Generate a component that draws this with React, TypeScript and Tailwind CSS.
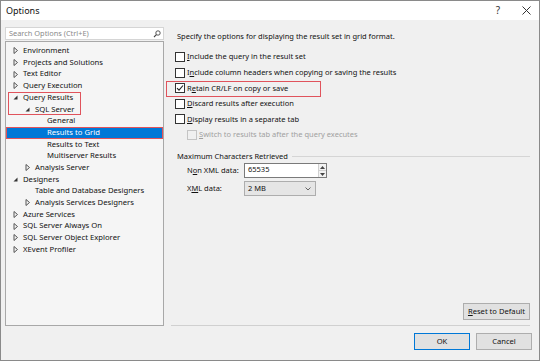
import React from "react";

type Node = {
  label: string;
  level: number;
  expander: "open" | "closed" | "none";
  selected?: boolean;
};

const tree: Node[] = [
  { label: "Environment", level: 0, expander: "closed" },
  { label: "Projects and Solutions", level: 0, expander: "closed" },
  { label: "Text Editor", level: 0, expander: "closed" },
  { label: "Query Execution", level: 0, expander: "closed" },
  { label: "Query Results", level: 0, expander: "open" },
  { label: "SQL Server", level: 1, expander: "open" },
  { label: "General", level: 2, expander: "none" },
  { label: "Results to Grid", level: 2, expander: "none", selected: true },
  { label: "Results to Text", level: 2, expander: "none" },
  { label: "Multiserver Results", level: 2, expander: "none" },
  { label: "Analysis Server", level: 1, expander: "closed" },
  { label: "Designers", level: 0, expander: "open" },
  { label: "Table and Database Designers", level: 1, expander: "none" },
  { label: "Analysis Services Designers", level: 1, expander: "closed" },
  { label: "Azure Services", level: 0, expander: "closed" },
  { label: "SQL Server Always On", level: 0, expander: "closed" },
  { label: "SQL Server Object Explorer", level: 0, expander: "closed" },
  { label: "XEvent Profiler", level: 0, expander: "closed" },
];

const Expander = ({ kind, light }: { kind: Node["expander"]; light?: boolean }) => {
  if (kind === "none") return <span className="w-[9px]" />;
  if (kind === "open")
    return (
      <svg width="9" height="9" viewBox="0 0 9 9" className="shrink-0">
        <path d="M6.5 2.5 L6.5 6.5 L2.5 6.5 Z" fill={light ? "#fff" : "#333"} />
      </svg>
    );
  return (
    <svg width="9" height="9" viewBox="0 0 9 9" className="shrink-0">
      <path d="M3 1.5 L6.5 4.5 L3 7.5 Z" fill="none" stroke="#555" strokeWidth="1" />
    </svg>
  );
};

const Check = ({ checked, disabled }: { checked?: boolean; disabled?: boolean }) => (
  <span
    className={`w-[10px] h-[10px] border shrink-0 flex items-center justify-center ${
      disabled ? "border-[#c4c4c4] bg-[#f0f0f0]" : "border-[#333] bg-white"
    }`}
  >
    {checked && (
      <svg width="8" height="8" viewBox="0 0 8 8">
        <path d="M1 4.2 L3 6.2 L7 1.5" fill="none" stroke="#222" strokeWidth="1.1" />
      </svg>
    )}
  </span>
);

const Opt = ({
  pre,
  key1,
  post,
  checked,
  disabled,
}: {
  pre: string;
  key1: string;
  post: string;
  checked?: boolean;
  disabled?: boolean;
}) => (
  <div className="flex items-center gap-[2px] h-[15.6px]">
    <Check checked={checked} disabled={disabled} />
    <span className={disabled ? "text-[#a0a0a0]" : "text-[#111]"}>
      {pre}
      <span className="underline underline-offset-1">{key1}</span>
      {post}
    </span>
  </div>
);

export default function App() {
  return (
    <div
      className="w-[540px] h-[361px] flex flex-col border border-[#8a8a8a] bg-[#f0f0f0] text-[7.5px] text-[#111] overflow-hidden"
      style={{ fontFamily: '"Noto Sans", "Open Sans", sans-serif' }}
    >
      {/* title bar */}
      <div className="h-[19px] bg-white flex items-center justify-between pl-[5px] pr-[8px] shrink-0">
        <span className="text-[9px]">Options</span>
        <div className="flex items-center gap-[22px] text-[10px] text-[#333]">
          <span>?</span>
          <svg width="9" height="9" viewBox="0 0 9 9">
            <path d="M0.5 0.5 L8.5 8.5 M8.5 0.5 L0.5 8.5" stroke="#333" strokeWidth="1" />
          </svg>
        </div>
      </div>

      <div className="flex flex-1 pt-[7px] min-h-0">
        {/* left pane */}
        <div className="ml-[4px] w-[159px] flex flex-col shrink-0">
          <div className="h-[13px] bg-white border border-[#d5d5d5] flex items-center justify-between pl-[3px] pr-[2px]">
            <span className="text-[#8a8a8a] text-[7.4px]">Search Options (Ctrl+E)</span>
            <svg width="8" height="8" viewBox="0 0 8 8">
              <circle cx="5" cy="3" r="2.2" fill="none" stroke="#444" strokeWidth="0.9" />
              <path d="M3.4 4.6 L1 7" stroke="#444" strokeWidth="1.1" />
            </svg>
          </div>
          <div className="relative mt-[1px] h-[285px] bg-[#f5f5f5] border border-[#a8a8a8] pt-[3px] text-[7.7px]">
            {tree.map((n) => (
              <div
                key={n.label}
                className={`flex items-center h-[11.7px] ${
                  n.selected
                    ? "bg-[#0078d7] text-white outline outline-[1.5px] outline-[#e0535c] -outline-offset-1"
                    : ""
                }`}
                style={{ paddingLeft: 5 + n.level * 12 }}
              >
                <Expander kind={n.expander} light={n.selected} />
                <span className="ml-[3px] whitespace-nowrap">{n.label}</span>
              </div>
            ))}
            <div className="absolute left-[2px] top-[50px] w-[73px] h-[23px] border-[1.5px] border-[#e0535c]" />
          </div>
        </div>

        {/* right pane */}
        <div className="flex-1 ml-[7px] mr-[9px] flex flex-col border-b border-[#d0d0d0] relative">
          <div className="pl-[6px] pt-[4px]">
            Specify the options for displaying the result set in grid format.
          </div>
          <div className="pl-[4px] mt-[7px] flex flex-col">
            <Opt pre="" key1="I" post="nclude the query in the result set" />
            <Opt pre="I" key1="n" post="clude column headers when copying or saving the results" />
            <Opt pre="R" key1="e" post="tain CR/LF on copy or save" checked />
            <Opt pre="" key1="D" post="iscard results after execution" />
            <Opt pre="" key1="D" post="isplay results in a separate tab" />
            <div className="pl-[12px]">
              <Opt pre="" key1="S" post="witch to results tab after the query executes" disabled />
            </div>
          </div>
          <div className="absolute left-[-5px] top-[54px] w-[155px] h-[16px] border-[1.5px] border-[#e0535c]" />

          <div className="mt-[8px] pl-[6px] flex items-center gap-[4px]">
            <span className="whitespace-nowrap">Maximum Characters Retrieved</span>
            <div className="flex-1 h-px bg-[#d5d5d5]" />
          </div>
          <div className="pl-[16px] mt-[1px] flex flex-col gap-[3px]">
            <div className="flex items-center">
              <span className="w-[57px]">
                N<span className="underline underline-offset-1">o</span>n XML data:
              </span>
              <div className="w-[83px] h-[15px] bg-white border border-[#7a7a7a] flex items-stretch">
                <span className="flex-1 pl-[3px] leading-[11px]">65535</span>
                <div className="w-[8px] flex flex-col border-l border-[#d0d0d0]">
                  <div className="flex-1 flex items-center justify-center bg-[#f2f2f2] border-b border-[#d0d0d0]">
                    <svg width="5" height="3" viewBox="0 0 5 3">
                      <path d="M0 3 L2.5 0 L5 3 Z" fill="#444" />
                    </svg>
                  </div>
                  <div className="flex-1 flex items-center justify-center bg-[#f2f2f2]">
                    <svg width="5" height="3" viewBox="0 0 5 3">
                      <path d="M0 0 L2.5 3 L5 0 Z" fill="#444" />
                    </svg>
                  </div>
                </div>
              </div>
            </div>
            <div className="flex items-center">
              <span className="w-[57px]">
                X<span className="underline underline-offset-1">M</span>L data:
              </span>
              <div className="w-[72px] h-[15px] bg-[#e5e5e5] border border-[#adadad] flex items-center justify-between pl-[3px] pr-[4px]">
                <span>2 MB</span>
                <svg width="6" height="4" viewBox="0 0 6 4">
                  <path d="M0.5 0.5 L3 3 L5.5 0.5" fill="none" stroke="#555" strokeWidth="0.9" />
                </svg>
              </div>
            </div>
          </div>

          <div className="mt-auto mb-[5px] flex justify-end">
            <button className="w-[67px] h-[17px] bg-[#e1e1e1] border border-[#adadad] text-[7.6px] leading-none">
              <span className="underline underline-offset-1">R</span>eset to Default
            </button>
          </div>
        </div>
      </div>

      {/* footer */}
      <div className="h-[34px] shrink-0 flex justify-end items-start gap-[6px] pt-[7px] pr-[7px]">
        <button className="w-[56px] h-[17px] bg-[#e1e1e1] border border-[#0078d7] text-[7.6px] leading-none">
          OK
        </button>
        <button className="w-[56px] h-[17px] bg-[#e1e1e1] border border-[#adadad] text-[7.6px] leading-none">
          Cancel
        </button>
      </div>
    </div>
  );
}
